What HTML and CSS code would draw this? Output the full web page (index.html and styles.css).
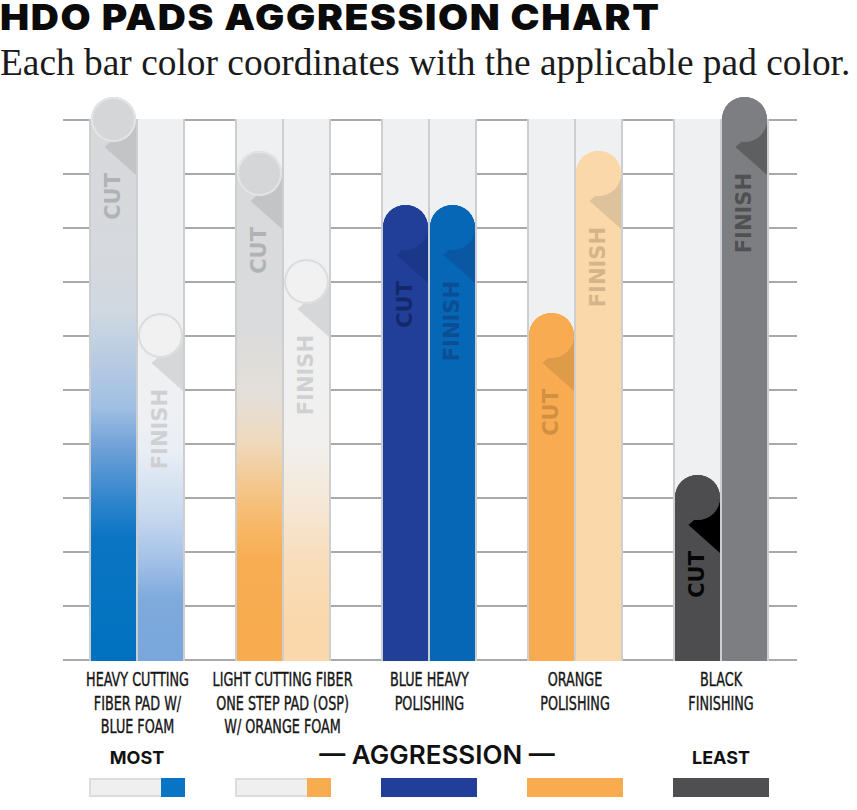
FILE: index.html
```html
<!DOCTYPE html>
<html lang="en">
<head>
<meta charset="utf-8">
<title>HDO Pads Aggression Chart</title>
<link rel="stylesheet" href="styles.css">
</head>
<body>
<h1 class="title">HDO PADS AGGRESSION CHART</h1>
<p class="subtitle">Each bar color coordinates with the applicable pad color.</p>

<div class="chart">
  <div class="group">
    <div class="track"><div class="bar bar--fiber-blue-cut" style="height:564px"><span class="bar__label">CUT</span></div></div>
    <div class="track"><div class="bar bar--fiber-blue-finish" style="height:348px"><span class="bar__label">FINISH</span></div></div>
  </div>
  <div class="group">
    <div class="track"><div class="bar bar--fiber-orange-cut" style="height:510px"><span class="bar__label">CUT</span></div></div>
    <div class="track"><div class="bar bar--fiber-orange-finish" style="height:402px"><span class="bar__label">FINISH</span></div></div>
  </div>
  <div class="group">
    <div class="track"><div class="bar bar--blue-cut" style="height:456px"><span class="bar__label">CUT</span></div></div>
    <div class="track"><div class="bar bar--blue-finish" style="height:456px"><span class="bar__label">FINISH</span></div></div>
  </div>
  <div class="group">
    <div class="track"><div class="bar bar--orange-cut" style="height:348px"><span class="bar__label">CUT</span></div></div>
    <div class="track"><div class="bar bar--orange-finish" style="height:510px"><span class="bar__label">FINISH</span></div></div>
  </div>
  <div class="group">
    <div class="track"><div class="bar bar--black-cut" style="height:186px"><span class="bar__label">CUT</span></div></div>
    <div class="track"><div class="bar bar--black-finish" style="height:564px"><span class="bar__label">FINISH</span></div></div>
  </div>
</div>

<div class="labels">
  <div class="label">HEAVY CUTTING<br>FIBER PAD W/<br>BLUE FOAM</div>
  <div class="label">LIGHT CUTTING FIBER<br>ONE STEP PAD (OSP)<br>W/ ORANGE FOAM</div>
  <div class="label">BLUE HEAVY<br>POLISHING</div>
  <div class="label">ORANGE<br>POLISHING</div>
  <div class="label">BLACK<br>FINISHING</div>
</div>

<div class="legend-head">
  <div class="legend-key">MOST</div>
  <div class="legend-key legend-key--agg">— AGGRESSION —</div>
  <div class="legend-key legend-key--least">LEAST</div>
</div>

<div class="swatches">
  <div class="swatch swatch--fade"><span class="swatch__end swatch__end--blue"></span></div>
  <div class="swatch swatch--fade"><span class="swatch__end swatch__end--orange"></span></div>
  <div class="swatch swatch--navy"></div>
  <div class="swatch swatch--orange"></div>
  <div class="swatch swatch--black"></div>
</div>
</body>
</html>
```

FILE: styles.css
```css
* { box-sizing: border-box; }

body {
  margin: 0;
  background: #ffffff;
  color: #111111;
}

.title {
  width: max-content;
  margin: 0;
  font: 900 36px/34px Inter, "DejaVu Sans", sans-serif;
  letter-spacing: 1.5px;
  color: #0b0b0b;
  white-space: nowrap;
  transform: scaleX(1.08);
  transform-origin: left center;
}

.subtitle {
  margin: 9px 0 0;
  font: 37.4px/40px "Liberation Serif", serif;
  color: #1b1b1b;
  white-space: nowrap;
}

/* ---------- chart ---------- */
.chart {
  margin: 36px 0 0 63px;
  width: 734px;
  height: 542px;
  padding-left: 26px;
  display: flex;
  gap: 50px;
  background: repeating-linear-gradient(to bottom, #a9a9a9 0 2px, transparent 2px 54px);
}

.group {
  display: flex;
  width: 96px;
  border-right: 2px solid #cdcecf;
}

.track {
  width: 47px;
  border-left: 2px solid #cdcecf;
  background: #eef0f1;
  display: flex;
  flex-direction: column;
  justify-content: flex-end;
}

.bar {
  position: relative;
  flex-shrink: 0;
  border-radius: 22.5px 22.5px 0 0;
  display: flex;
  flex-direction: column;
  align-items: center;
  padding-top: 76px;
}

.bar::before {
  content: "";
  position: absolute;
  left: 0;
  top: 0;
  width: 100%;
  height: 80px;
  background: var(--shade);
  clip-path: polygon(30% 50px, 100% 22px, 100% 78px);
}

.bar::after {
  content: "";
  position: absolute;
  left: 0;
  top: 0;
  width: 45px;
  height: 45px;
  border-radius: 50%;
  background: var(--cap);
  box-shadow: inset 0 0 0 2px var(--ring);
}

.bar__label {
  position: relative;
  z-index: 1;
  writing-mode: vertical-rl;
  transform: rotate(180deg);
  font: 700 21px/1 "DejaVu Sans", sans-serif;
  color: var(--ink);
}

.bar--fiber-blue-cut {
  --cap: #d5d6d8; --ring: #e3e4e5; --shade: #c3c4c6; --ink: #b1b2b4;
  background: linear-gradient(to bottom, #d7d8da 0%, #d6d9dd 28%, #d0d8e2 38%, #a0bfe3 55%, #70a1d8 62%, #2d84cc 72%, #0b75c3 78%, #0072bf 100%);
}
.bar--fiber-blue-finish {
  --cap: #f1f1f2; --ring: #dbdcdd; --shade: #d6d7d9; --ink: #cfd0d2;
  background: linear-gradient(to bottom, #eff0f1 0%, #eef0f3 30%, #e9eef5 40%, #c5d7ee 59%, #a3c1e7 71%, #7eaadd 82%, #79a6dc 100%);
}
.bar--fiber-orange-cut {
  --cap: #d5d6d8; --ring: #e3e4e5; --shade: #c3c4c6; --ink: #b1b2b4;
  background: linear-gradient(to bottom, #d8d9db 0%, #dadbdc 35%, #e4dfd9 48%, #efd9bd 57%, #f4c88f 65%, #f7b86a 73%, #f8ad52 80%, #f8ab4f 100%);
}
.bar--fiber-orange-finish {
  --cap: #f1f1f2; --ring: #dbdcdd; --shade: #d6d7d9; --ink: #cfd0d2;
  background: linear-gradient(to bottom, #eff0f1 0%, #f1f0ef 45%, #f5e8d7 60%, #f9ddbb 75%, #fbd8ab 90%);
}
.bar--blue-cut {
  --cap: #213f99; --ring: #213f99; --shade: #1b378a; --ink: #13296a;
  background: #213f99;
}
.bar--blue-finish {
  --cap: #0667b6; --ring: #0667b6; --shade: #0a58a3; --ink: #0b4e93;
  background: #0667b6;
}
.bar--orange-cut {
  --cap: #f8ab50; --ring: #f8ab50; --shade: #de9b48; --ink: #d28f40;
  background: #f8ab50;
}
.bar--orange-finish {
  --cap: #fbd8aa; --ring: #fbd8aa; --shade: #dec29c; --ink: #d6b48a;
  background: #fbd8aa;
}
.bar--black-cut {
  --cap: #4d4d4f; --ring: #4d4d4f; --shade: #000000; --ink: #050505;
  background: #4d4d4f;
}
.bar--black-finish {
  --cap: #7d7e81; --ring: #7d7e81; --shade: #5e5f61; --ink: #4f5052;
  background: #7d7e81;
}

/* ---------- labels ---------- */
.labels {
  display: grid;
  grid-template-columns: repeat(5, 96px);
  column-gap: 50px;
  margin: 7px 0 0 89px;
}

.label {
  justify-self: center;
  white-space: nowrap;
  text-align: center;
  font: 20px/23.5px "DejaVu Sans Condensed", "DejaVu Sans", sans-serif;
  font-stretch: condensed;
  transform: scaleX(0.71);
  color: #161616;
  -webkit-text-stroke: 0.4px #161616;
}

/* ---------- legend ---------- */
.legend-head {
  display: grid;
  grid-template-columns: repeat(5, 96px);
  column-gap: 50px;
  margin: 3px 0 0 89px;
  align-items: baseline;
}

.legend-key {
  justify-self: center;
  font: 700 18px/26px Inter, sans-serif;
  color: #111111;
  white-space: nowrap;
}

.legend-key--agg {
  grid-column: 2 / 5;
  font-size: 26px;
  font-weight: 600;
  padding-left: 16px;
}

.legend-key--least {
  grid-column: 5;
}

.swatches {
  display: grid;
  grid-template-columns: repeat(5, 96px);
  column-gap: 50px;
  margin: 7px 0 0 89px;
}

.swatch {
  height: 19px;
  display: flex;
}

.swatch--fade {
  background: #efefef;
  box-shadow: inset 0 0 0 2px #dcdcdc;
  justify-content: flex-end;
}

.swatch__end {
  width: 24px;
}

.swatch__end--blue { background: #0a74c4; }
.swatch__end--orange { background: #f8ac50; }
.swatch--navy { background: #213f99; }
.swatch--orange { background: #f8ab4f; }
.swatch--black { background: #4f4f51; }
```
